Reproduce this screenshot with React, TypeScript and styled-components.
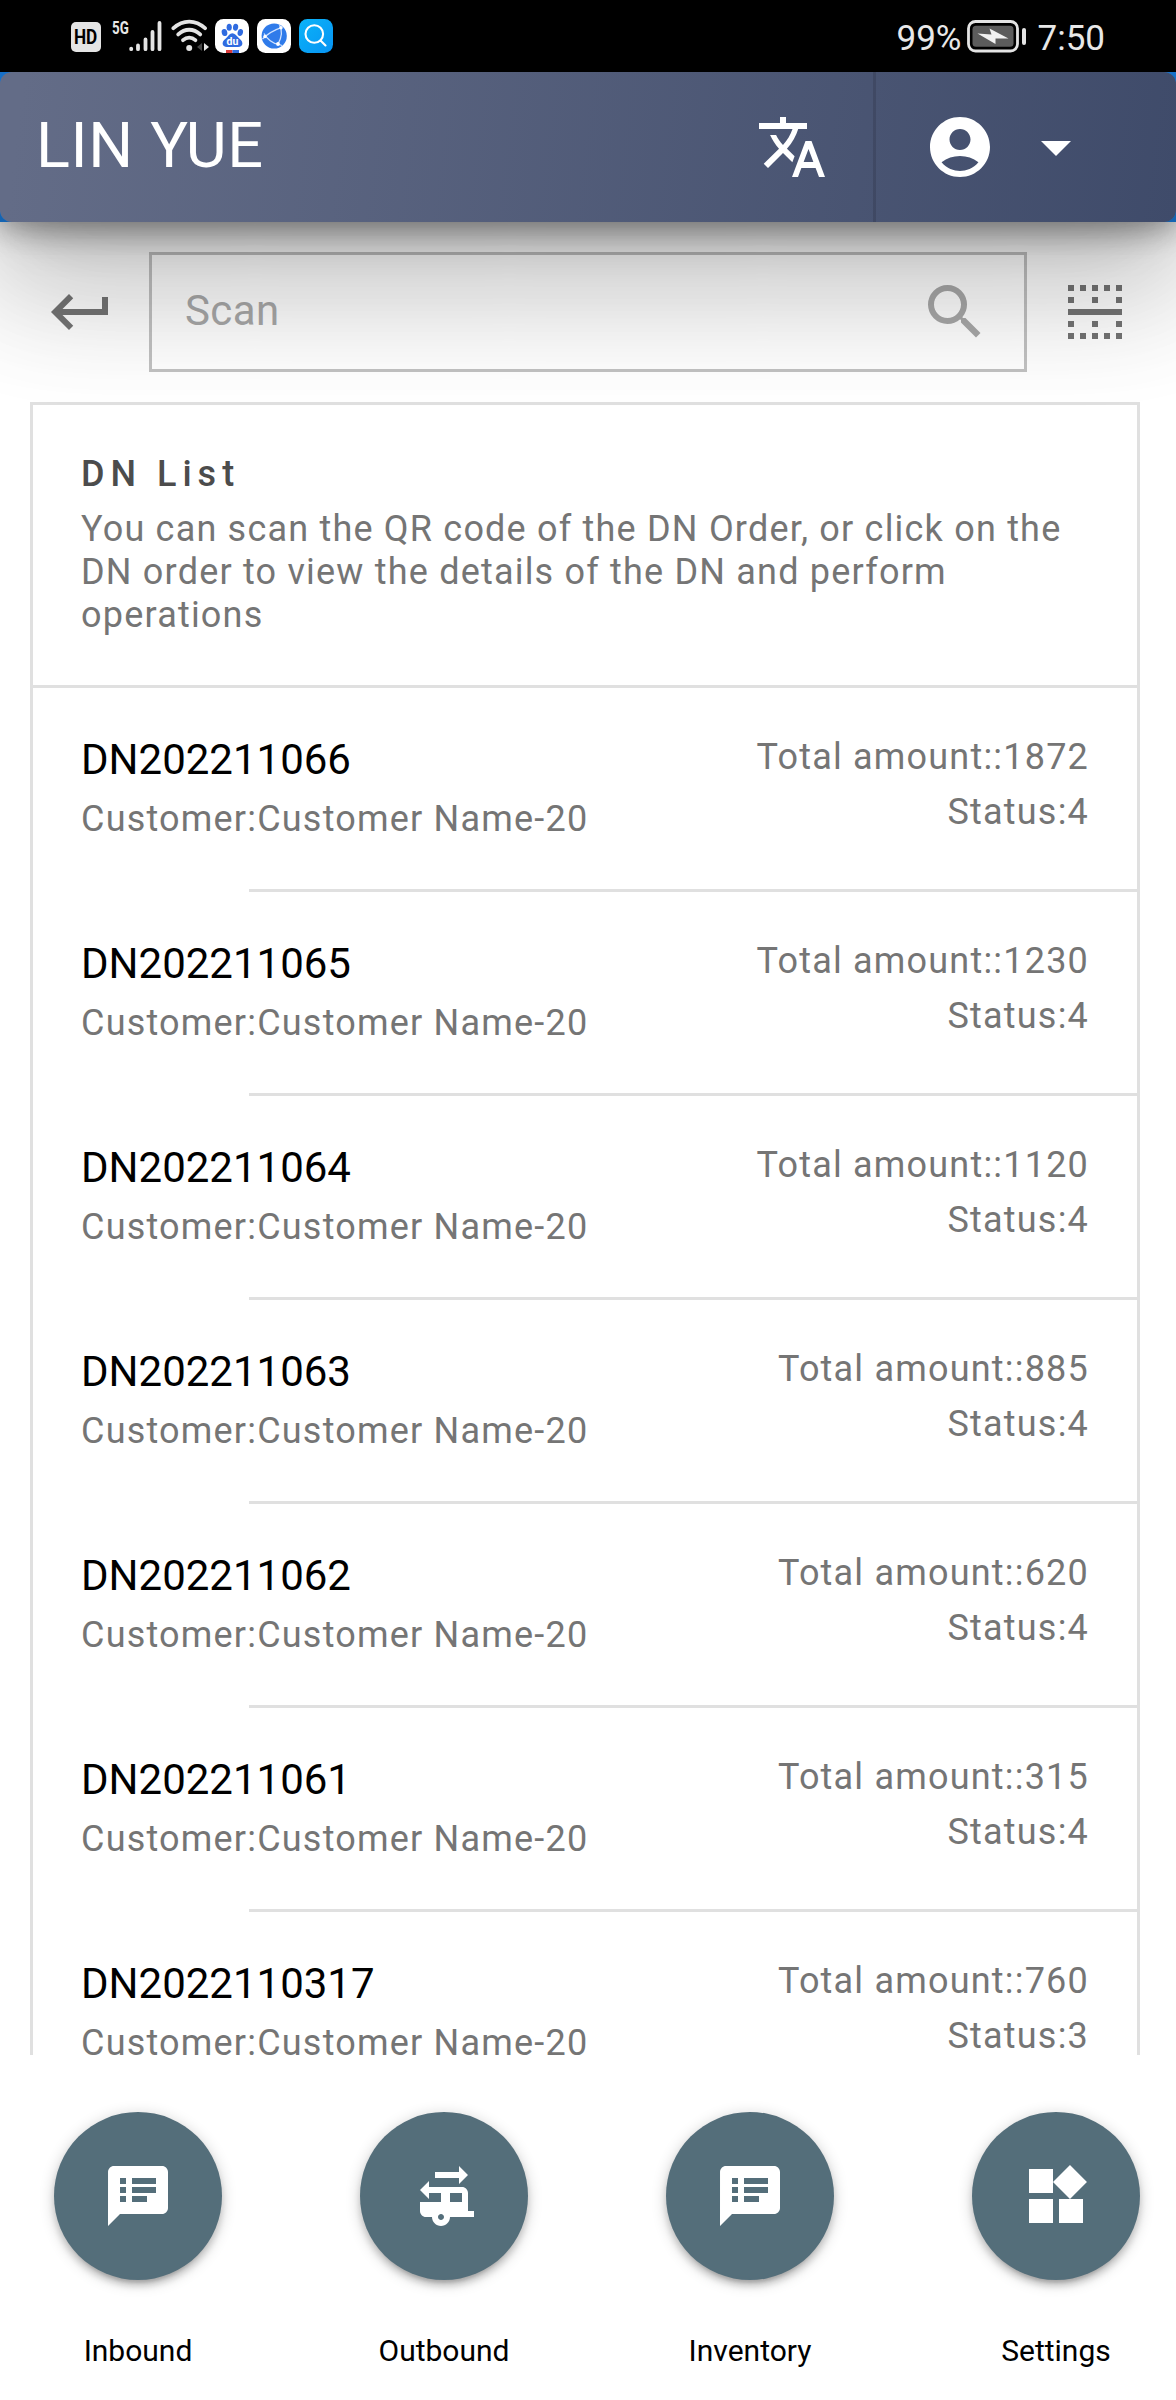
import React from 'react';
import styled, { createGlobalStyle } from 'styled-components';
import {
  MdTranslate, MdAccountCircle, MdArrowDropDown, MdKeyboardReturn, MdSearch,
  MdBorderHorizontal, MdSpeakerNotes, MdRvHookup, MdWidgets,
} from 'react-icons/md';

const Global = createGlobalStyle`
  *, *::before, *::after { box-sizing: border-box; }
  body { margin: 0; background: #fff; font-family: Roboto, "Noto Sans", sans-serif; color: #000; }
`;

const Screen = styled.div`
  width: 1176px;
  height: 2400px;
  display: flex;
  flex-direction: column;
  background: #fff;
  overflow: hidden;
`;

const StatusBar = styled.div`
  height: 72px;
  flex: none;
  position: relative;
  z-index: 3;
  display: flex;
  justify-content: space-between;
  align-items: flex-start;
  padding: 0 71px;
  background: #000;
  color: #e8e8e8;
`;

const StatusGroup = styled.div`
  display: flex;
  align-items: flex-start;
`;

const HdBadge = styled.div`
  width: 30px;
  height: 30px;
  margin-top: 22px;
  border-radius: 5px;
  background: #e4e4e4;
  color: #000;
  font-size: 20px;
  font-weight: 700;
  line-height: 31px;
  display: flex;
  justify-content: center;
  span { transform: scaleX(0.86); }
`;

const NetLabel = styled.span`
  width: 17px;
  margin: 19px 0 0 11px;
  font-size: 18px;
  line-height: 18px;
  font-weight: 700;
  span { display: block; transform: scaleX(0.74); transform-origin: left; }
`;

const Glyph = styled.svg<{ $ml?: number; $mt: number }>`
  display: block;
  flex: none;
  margin: ${p => p.$mt}px 0 0 ${p => p.$ml ?? 0}px;
`;

const StatusText = styled.span<{ $ml?: number }>`
  margin: 18px 0 0 ${p => p.$ml ?? 0}px;
  font-size: 35px;
  line-height: 42px;
`;

const Header = styled.header`
  height: 150px;
  flex: none;
  position: relative;
  z-index: 2;
  background: #1976d2;
  box-shadow: 0 0 30px 6px rgba(0, 0, 0, 0.2), 0 0 30px rgba(0, 0, 0, 0.24);
`;

const Toolbar = styled.div`
  height: 150px;
  border-radius: 12px;
  display: flex;
  align-items: center;
  padding-left: 36px;
  color: #fff;
  background: linear-gradient(97deg, #636c87 2%, #3f4b6a 100%);
  box-shadow: 0 33px 45px -21px rgba(0, 0, 0, 0.2), 0 72px 114px 9px rgba(0, 0, 0, 0.14),
    0 27px 138px 24px rgba(0, 0, 0, 0.12);
`;

const Title = styled.h1`
  flex: 1;
  margin: 0 0 3px;
  font-size: 63px;
  line-height: 74px;
  font-weight: 400;
  letter-spacing: 0.63px;
`;

const LangButton = styled.div`
  width: 165px;
  height: 150px;
  display: flex;
  align-items: center;
  padding-left: 45px;
  border-right: 3px solid rgba(0, 0, 0, 0.12);
`;

const AccountButton = styled.div`
  width: 300px;
  height: 150px;
  display: flex;
  align-items: center;
  padding-left: 48px;
  gap: 24px;
`;

const ScanRow = styled.div`
  height: 180px;
  flex: none;
  display: flex;
  align-items: center;
  padding: 0 45px;
  color: #757575;
`;

const ScanField = styled.div`
  width: 878px;
  height: 120px;
  margin: 0 32px;
  display: flex;
  align-items: center;
  justify-content: space-between;
  padding: 0 33px;
  border: 3px solid rgba(0, 0, 0, 0.24);
  color: #a9a9a9;
  font-size: 42px;
  line-height: 50px;
  letter-spacing: 0.4px;
  span { margin-bottom: 2px; }
`;

const ListArea = styled.div`
  height: 1653px;
  flex: none;
  overflow: hidden;
  padding: 0 36px 0 30px;
`;

const List = styled.div`
  border: 3px solid #e0e0e0;
`;

const Intro = styled.div`
  height: 283px;
  padding: 48px 48px 0;
  border-bottom: 3px solid #e0e0e0;
`;

const IntroTitle = styled.div`
  font-size: 36px;
  line-height: 43px;
  font-weight: 500;
  letter-spacing: 6px;
  color: #4c4c4c;
`;

const IntroText = styled.div`
  margin-top: 12px;
  font-size: 36px;
  line-height: 43.2px;
  letter-spacing: 1.2px;
  color: #757575;
`;

const Row = styled.div`
  height: 204px;
  display: flex;
  justify-content: space-between;
  padding: 0 48px;
  background: linear-gradient(#e0e0e0, #e0e0e0) no-repeat 216px 100% / 100% 3px;
`;

const RowMain = styled.div`
  padding-top: 47px;
`;

const OrderNo = styled.div`
  font-size: 42px;
  line-height: 50px;
`;

const Caption = styled.div`
  margin-top: 13px;
  font-size: 36px;
  line-height: 43px;
  letter-spacing: 1.2px;
  color: #757575;
`;

const RowSide = styled.div`
  padding-top: 48px;
  text-align: right;
  font-size: 36px;
  line-height: 43px;
  letter-spacing: 1.2px;
  color: #757575;
  div + div { margin-top: 12px; }
`;

const Footer = styled.nav`
  flex: 1;
  display: grid;
  grid-template-columns: repeat(4, 168px);
  column-gap: 138px;
  align-content: start;
  padding: 57px 0 0 54px;
  background: #fff;
`;

const NavItem = styled.div`
  display: flex;
  flex-direction: column;
  align-items: center;
  font-size: 30px;
  line-height: 36px;
`;

const Fab = styled.div`
  width: 168px;
  height: 168px;
  margin-bottom: 53px;
  border-radius: 50%;
  display: flex;
  align-items: center;
  justify-content: center;
  color: #fff;
  background: #546e7a;
  box-shadow: 0 3px 15px rgba(0, 0, 0, 0.2), 0 6px 6px rgba(0, 0, 0, 0.14), 0 9px 3px -6px rgba(0, 0, 0, 0.12);
`;

const orders = [
  { no: 'DN202211066', total: 1872, status: 4 },
  { no: 'DN202211065', total: 1230, status: 4 },
  { no: 'DN202211064', total: 1120, status: 4 },
  { no: 'DN202211063', total: 885, status: 4 },
  { no: 'DN202211062', total: 620, status: 4 },
  { no: 'DN202211061', total: 315, status: 4 },
  { no: 'DN2022110317', total: 760, status: 3 },
];

const nav = [
  { label: 'Inbound', Icon: MdSpeakerNotes },
  { label: 'Outbound', Icon: MdRvHookup },
  { label: 'Inventory', Icon: MdSpeakerNotes },
  { label: 'Settings', Icon: MdWidgets },
];

const Signal = () => (
  <Glyph $mt={20} width="34" height="32" viewBox="0 0 34 32" stroke="#e4e4e4" strokeWidth="3.8" strokeLinecap="round">
    <path d="M2.2 28.6v.6M9 25.500v3.700M16.500 19.500v9.700M23.500 12v17.200M30.500 3v26.200" />
  </Glyph>
);

const Wifi = () => (
  <Glyph $ml={8} $mt={18} width="40" height="36" viewBox="0 0 40 36" fill="none" stroke="#e4e4e4" strokeWidth="3.8" strokeLinecap="round">
    <path d="M2.400 10.200C12 1.500 24.400 1.500 34 10.200" />
    <path d="M7.200 16.400C14 10.200 22.400 10.200 29.200 16.400" />
    <path d="M12 22.200C15.800 18.800 20.600 18.800 24.400 22.200" />
    <circle cx="18.200" cy="30" r="3" fill="#e4e4e4" stroke="none" />
    <path d="M31 25v8l-5-4z" fill="#444" stroke="none" />
    <path d="M33 25l5 4-5 4z" fill="#e4e4e4" stroke="none" />
  </Glyph>
);

const BaiduPaw = () => (
  <Glyph $ml={4} $mt={19} width="34" height="34" viewBox="0 0 34 34">
    <rect width="34" height="34" rx="8.500" fill="#fff" />
    <g fill="#2f6be0">
      <ellipse cx="9.500" cy="13.500" rx="2.800" ry="3.600" transform="rotate(-12 9.500 13.500)" />
      <ellipse cx="14.200" cy="8.200" rx="2.600" ry="3.500" />
      <ellipse cx="20.600" cy="8.200" rx="2.600" ry="3.500" transform="rotate(8 20.600 8.200)" />
      <ellipse cx="25.300" cy="13.500" rx="2.700" ry="3.500" transform="rotate(12 25.300 13.500)" />
      <path d="M17.300 14.200c-2.600 0-3.800 2.400-5.300 4.100-1.800 2-4.400 3.400-4.400 6 0 2.600 2 3.700 4.400 3.700h11c2.600 0 4.400-1.200 4.400-3.700 0-2.700-2.500-3.900-4.300-6-1.500-1.700-3.200-4.100-5.800-4.100z" />
    </g>
    <text x="17.400" y="26.300" textAnchor="middle" fontSize="10.500" fontWeight="700" fontFamily="Roboto, sans-serif" fill="#fff">du</text>
    <path d="M11 31h6.500v3H11z" fill="#d93a3a" />
    <path d="M17.500 31H24v3h-6.500z" fill="#2f6be0" />
  </Glyph>
);

const Globe = () => (
  <Glyph $ml={8} $mt={19} width="34" height="34" viewBox="0 0 34 34">
    <rect width="34" height="34" rx="8.500" fill="#fff" />
    <circle cx="17.200" cy="17" r="12.600" fill="#2f7bea" />
    <g fill="none" stroke="#cfe2ff" strokeWidth="1.300">
      <path d="M5.500 20C10 15.500 17 11 24.300 8.600M22.500 5.500C25 10.500 25 18 21 25M7 14.500C10 20 16 24.600 21 25M21 25l4 1.500" />
    </g>
    <circle cx="24" cy="8.800" r="1.700" fill="#fff" />
    <circle cx="21" cy="25" r="1.900" fill="#fff" />
    <circle cx="8" cy="17.500" r="1.700" fill="#fff" />
  </Glyph>
);

const SearchApp = () => (
  <Glyph $ml={8} $mt={19} width="34" height="34" viewBox="0 0 34 34">
    <defs>
      <linearGradient id="searchSky" x1="0" y1="0" x2="1" y2="1">
        <stop offset="0" stopColor="#0bb4f8" />
        <stop offset="1" stopColor="#0793f3" />
      </linearGradient>
    </defs>
    <rect width="34" height="34" rx="8.500" fill="url(#searchSky)" />
    <g fill="none" stroke="#fff" strokeWidth="2.100" strokeLinecap="round">
      <circle cx="15.300" cy="15" r="8.800" />
      <path d="M21.500 21.500l5 5" />
    </g>
  </Glyph>
);

const Battery = () => (
  <Glyph $ml={5} $mt={20} width="60" height="33" viewBox="0 0 60 33">
    <rect x="1.500" y="1.500" width="49" height="29.500" rx="7" fill="none" stroke="#e4e4e4" strokeWidth="2.800" />
    <rect x="5.500" y="5.800" width="41" height="21" rx="3.500" fill="#5c5c5c" />
    <path d="M10.500 13.500L24.500 14.500 22.500 8.500 41.500 18.500 28.500 18.500 28.500 24z" fill="#f2f2f2" />
    <rect x="55" y="8" width="4" height="17" rx="2" fill="#e4e4e4" />
  </Glyph>
);

export default function App() {
  return (
    <Screen>
      <Global />
      <StatusBar>
        <StatusGroup>
          <HdBadge><span>HD</span></HdBadge>
          <NetLabel><span>5G</span></NetLabel>
          <Signal />
          <Wifi />
          <BaiduPaw />
          <Globe />
          <SearchApp />
        </StatusGroup>
        <StatusGroup>
          <StatusText>99%</StatusText>
          <Battery />
          <StatusText $ml={11}>7:50</StatusText>
        </StatusGroup>
      </StatusBar>
      <Header>
        <Toolbar>
          <Title>LIN YUE</Title>
          <LangButton><MdTranslate size={72} /></LangButton>
          <AccountButton>
            <MdAccountCircle size={72} />
            <MdArrowDropDown size={72} />
          </AccountButton>
        </Toolbar>
      </Header>
      <ScanRow>
        <MdKeyboardReturn size={72} />
        <ScanField>
          <span>Scan</span>
          <MdSearch size={72} />
        </ScanField>
        <MdBorderHorizontal size={72} />
      </ScanRow>
      <ListArea>
        <List>
          <Intro>
            <IntroTitle>DN List</IntroTitle>
            <IntroText>
              You can scan the QR code of the DN Order, or click on the DN order to view the details of the DN and perform operations
            </IntroText>
          </Intro>
          {orders.map(o => (
            <Row key={o.no}>
              <RowMain>
                <OrderNo>{o.no}</OrderNo>
                <Caption>Customer:Customer Name-20</Caption>
              </RowMain>
              <RowSide>
                <div>Total amount::{o.total}</div>
                <div>Status:{o.status}</div>
              </RowSide>
            </Row>
          ))}
        </List>
      </ListArea>
      <Footer>
        {nav.map(({ label, Icon }) => (
          <NavItem key={label}>
            <Fab><Icon size={72} /></Fab>
            {label}
          </NavItem>
        ))}
      </Footer>
    </Screen>
  );
}
